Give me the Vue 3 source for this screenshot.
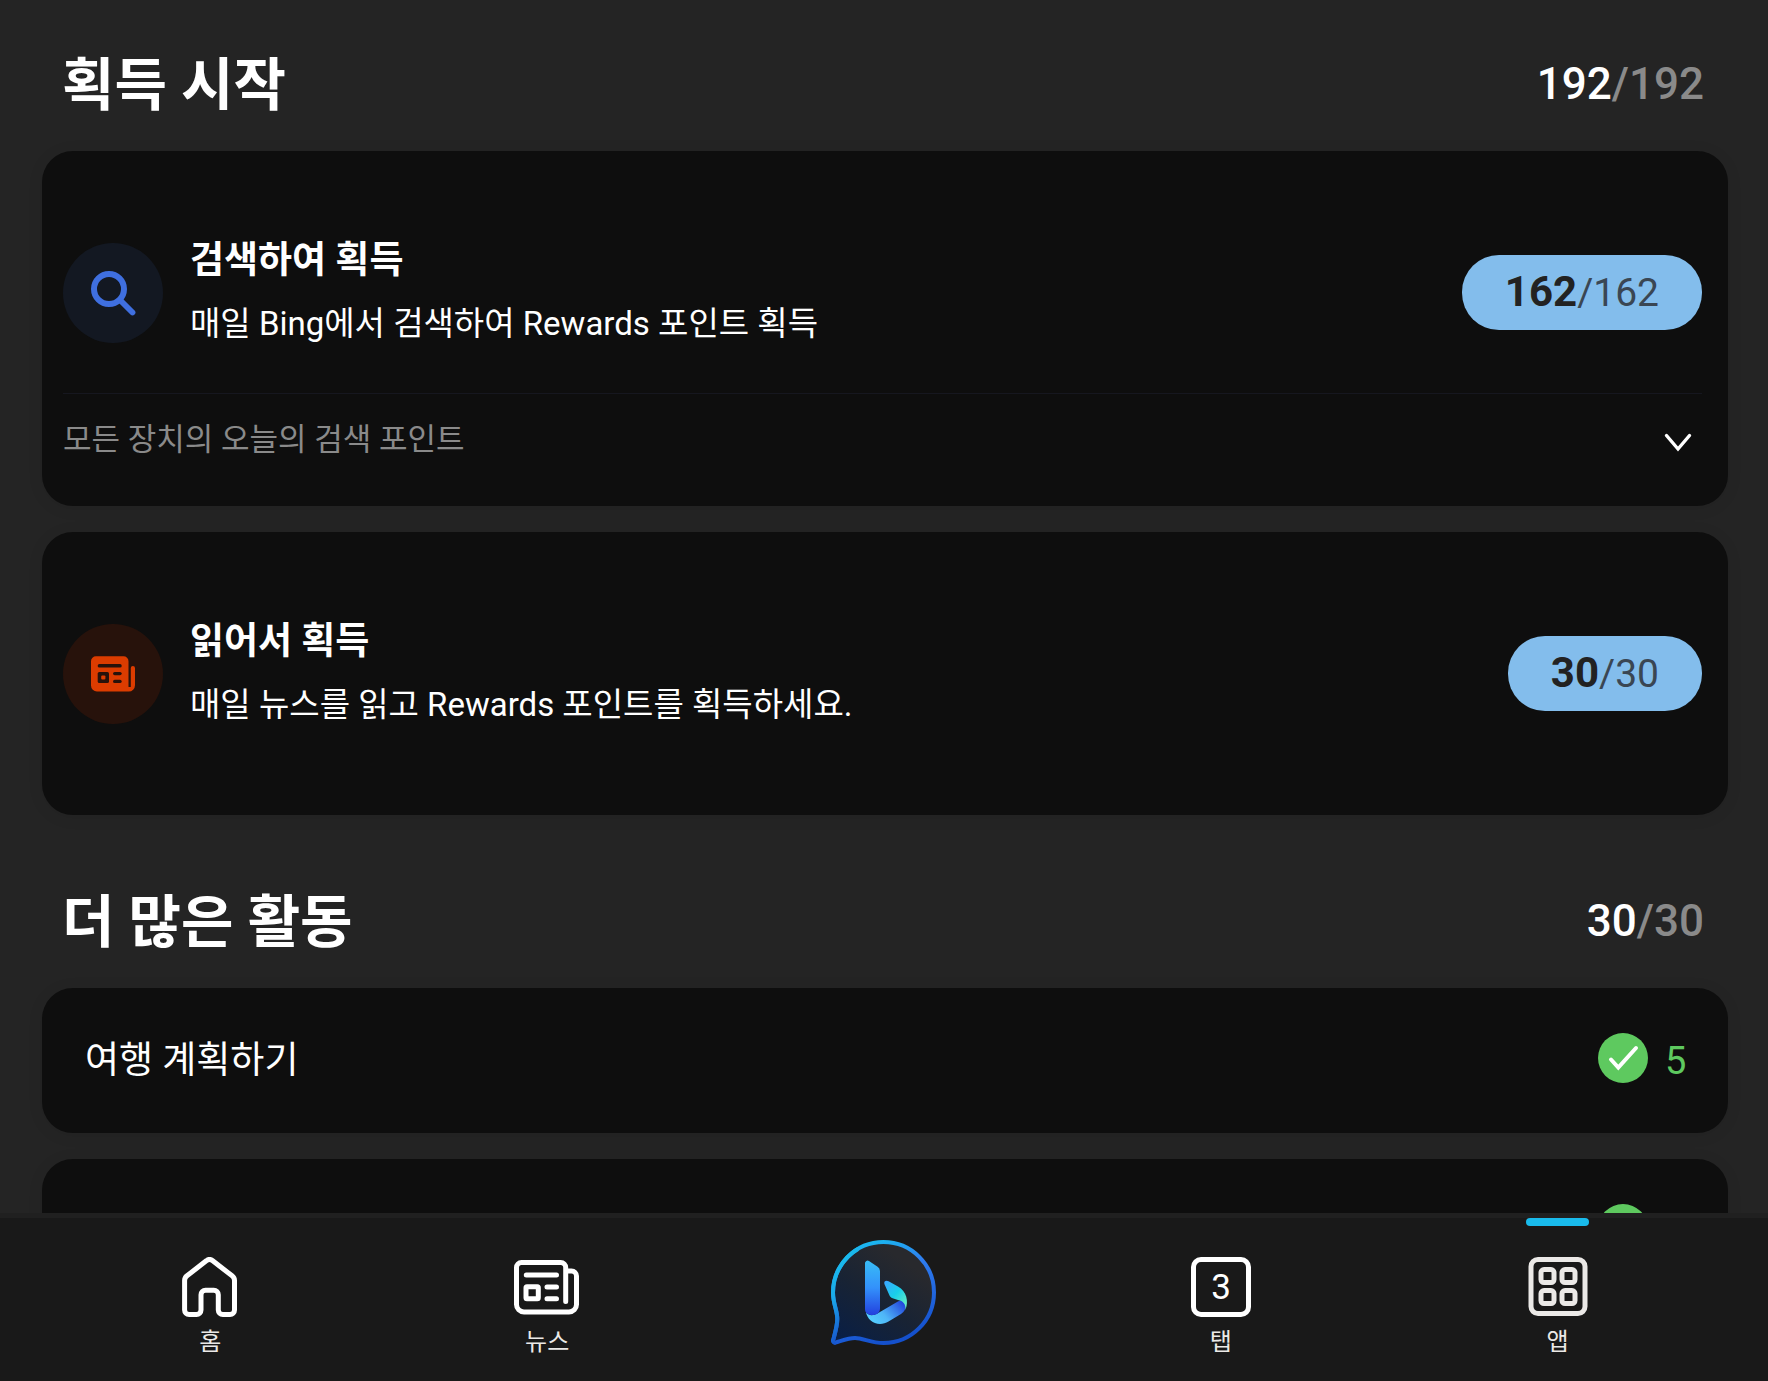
<script setup>
import {computed, ref} from "vue";

  const earn = ref([
    {
      id: 'search',
      title: '검색하여 획득',
      text: '매일 Bing에서 검색하여 Rewards 포인트 획득',
      points: 162,
      max: 162,
      more: '모든 장치의 오늘의 검색 포인트'
    },
    {
      id: 'read',
      title: '읽어서 획득',
      text: '매일 뉴스를 읽고 Rewards 포인트를 획득하세요.',
      points: 30,
      max: 30
    }
  ])

  const activities = ref([
    { id: 1, title: '여행 계획하기', points: 5 },
    { id: 2, title: '', points: null }
  ])

  const tabs = [
    { id: 'home', label: '홈' },
    { id: 'news', label: '뉴스' },
    { id: 'bing', label: '' },
    { id: 'tabs', label: '탭' },
    { id: 'apps', label: '앱' }
  ]

  const active = ref('apps')

  const earned = computed(() => earn.value.reduce((sum, item) => sum + item.points, 0))
  const total = computed(() => earn.value.reduce((sum, item) => sum + item.max, 0))
</script>

<template>
  <div class="screen">
    <main class="content">
      <section>
        <header class="section-head">
          <h2>획득 시작</h2>
          <div class="score">{{ earned }}<span>/{{ total }}</span></div>
        </header>

        <article v-for="item in earn" :key="item.id" class="card">
          <div class="earn-row" :class="{ 'has-more': item.more }">
            <svg v-if="item.id === 'search'" class="earn-icon" viewBox="0 0 100 100">
              <circle cx="50" cy="50" r="50" fill="#131822" />
              <g fill="none" stroke="#3f6fe0" stroke-linecap="round">
                <circle cx="46" cy="46" r="15" stroke-width="6" />
                <path d="M57 57L69.5 69.5" stroke-width="5.8" />
              </g>
            </svg>
            <svg v-else class="earn-icon" viewBox="0 0 100 100">
              <circle cx="50" cy="50" r="50" fill="#27120b" />
              <g transform="translate(28 32.3)">
                <path fill="#dc3c00" d="M5 0H32.5a5 5 0 0 1 5 5V30.7H39.8V11.8a2.1 2.1 0 0 1 4.2 0V29a6.3 6.3 0 0 1-6.3 6.3H6a6 6 0 0 1-6-6V5a5 5 0 0 1 5-5z" />
                <g fill="#27120b">
                  <rect x="6.7" y="7.8" width="24" height="3.5" rx="1.7" />
                  <rect x="6.7" y="15.6" width="11.3" height="11.2" rx="1.6" />
                  <rect x="22" y="15.6" width="8.7" height="3.4" rx="1.7" />
                  <rect x="22" y="23.4" width="8.7" height="3.4" rx="1.7" />
                </g>
                <rect x="10.2" y="19.1" width="4.2" height="4.2" rx="1" fill="#dc3c00" />
              </g>
            </svg>
            <div class="earn-text">
              <h3>{{ item.title }}</h3>
              <p>{{ item.text }}</p>
            </div>
            <div class="pill"><b>{{ item.points }}</b>/{{ item.max }}</div>
          </div>
          <button v-if="item.more" type="button" class="more">
            <span>{{ item.more }}</span>
            <svg viewBox="0 0 28 20">
              <path d="M2.5 2.5L14 16L25.5 2.5" />
            </svg>
          </button>
        </article>
      </section>

      <section class="activities">
        <header class="section-head">
          <h2>더 많은 활동</h2>
          <div class="score">30<span>/30</span></div>
        </header>

        <article v-for="item in activities" :key="item.id" class="card activity">
          <h3>{{ item.title }}</h3>
          <svg viewBox="0 0 50 50">
            <circle cx="25" cy="25" r="25" fill="#5ec95f" />
            <path d="M13 26.5L20.3 34.5L38 15" />
          </svg>
          <span class="points">{{ item.points }}</span>
        </article>
      </section>
    </main>

    <nav class="tab-bar">
      <a
        v-for="tab in tabs"
        :key="tab.id"
        :href="'#' + tab.id"
        :class="{ active: active === tab.id, logo: tab.id === 'bing' }"
        :aria-label="tab.label || 'Bing'"
        @click.prevent="active = tab.id"
      >
        <svg v-if="tab.id === 'home'" class="line" width="56" height="60" viewBox="0 0 56 60">
          <path d="M24.6 3.6L5 18.8a6 6 0 0 0-2.4 4.8V53a4.5 4.5 0 0 0 4.5 4.5h7.4A4.5 4.5 0 0 0 19 53V37.8a4.5 4.5 0 0 1 4.5-4.5h8.3a4.5 4.5 0 0 1 4.5 4.5V53a4.5 4.5 0 0 0 4.5 4.5h7.2a4.5 4.5 0 0 0 4.5-4.5V23.6a6 6 0 0 0-2.4-4.8L30.4 3.6a4.7 4.7 0 0 0-5.8 0z" />
        </svg>
        <svg v-else-if="tab.id === 'news'" class="line" width="66" height="60" viewBox="0 -3 66 60">
          <path d="M51.7 41.4V7.5a5 5 0 0 0-5-5H7.5a5 5 0 0 0-5 5V44.5A7.5 7.5 0 0 0 10 52H55a7.5 7.5 0 0 0 7.5-7.5V16a5 5 0 0 0-5-5H51.7" />
          <path d="M12.3 15H42.5M33 27H42.5M33 38.8H42.5" />
          <rect x="12" y="26.7" width="12.3" height="12" rx="1" />
        </svg>
        <svg v-else-if="tab.id === 'bing'" width="105" height="105" viewBox="0 0 105 105">
          <defs>
            <linearGradient id="ring" x1="0.2" y1="0" x2="0.5" y2="1">
              <stop offset="0" stop-color="#17c0f0" />
              <stop offset="0.35" stop-color="#2f7df0" />
              <stop offset="1" stop-color="#1450cc" />
            </linearGradient>
            <linearGradient id="ringSide" x1="0" y1="0" x2="0.25" y2="1">
              <stop offset="0" stop-color="#18c4ee" />
              <stop offset="0.5" stop-color="#1aa9ea" />
              <stop offset="1" stop-color="#164fcb" />
            </linearGradient>
            <linearGradient id="bubble" x1="0.1" y1="0.95" x2="0.65" y2="0.15">
              <stop offset="0" stop-color="#0a1f44" />
              <stop offset="0.5" stop-color="#182334" />
              <stop offset="1" stop-color="#28292d" />
            </linearGradient>
            <linearGradient id="stem" x1="0" y1="0" x2="0" y2="1">
              <stop offset="0" stop-color="#38bdf6" />
              <stop offset="0.5" stop-color="#3391fb" />
              <stop offset="1" stop-color="#2341de" />
            </linearGradient>
            <linearGradient id="bowl" x1="0" y1="0.7" x2="1" y2="0.2">
              <stop offset="0" stop-color="#55d0ff" />
              <stop offset="0.4" stop-color="#4fb6f8" />
              <stop offset="1" stop-color="#2243dc" />
            </linearGradient>
            <linearGradient id="leaf" x1="0.1" y1="0" x2="0.9" y2="0.9">
              <stop offset="0" stop-color="#3aa8ff" />
              <stop offset="0.5" stop-color="#18cfea" />
              <stop offset="1" stop-color="#6aeec4" />
            </linearGradient>
          </defs>
          <path fill="url(#bubble)" stroke="url(#ring)" stroke-width="4" d="M52.5 2A50.5 50.5 0 1 1 52.5 103C40 103 32 98 24 98C17 98 9 101.5 4.5 102.6A2 2 0 0 1 2.2 100C3.5 95 6.3 86 6.3 79C6.3 70 2 64 2 52.5A50.5 50.5 0 0 1 52.5 2z" />
          <path fill="none" stroke="url(#ringSide)" stroke-width="4" d="M4.5 102.6A2 2 0 0 1 2.2 100C3.5 95 6.3 86 6.3 79C6.3 70 2 64 2 52.5A50.5 50.5 0 0 1 27 9" />
          <path fill="url(#bowl)" d="M34.8 71.5C36 79 42 84 49 84C52 84 55 83.2 57.5 81.6L70 74C73.6 71.6 75.6 67.6 74.8 64.5C73.8 61 70 59.8 67.3 61.3L46 73.8C42 76 37 76 34.8 71.5z" />
          <path fill="url(#leaf)" d="M53.4 44C52.6 41.2 55 40 57.6 41.3L67 46.6C75.6 51.2 78 61.4 74.4 70C75.2 64.4 72 60.8 67 60L61.6 58.2C60 57.6 59 56.6 58.4 55.2z" />
          <path fill="url(#stem)" d="M34 23.2a2.5 2.5 0 0 1 4-2.1L46.6 26.8A5.4 5.4 0 0 1 49 31V68.5C49 73 45.5 75 41.5 75S34 73 34 69z" />
        </svg>
        <svg v-else-if="tab.id === 'tabs'" class="line" width="60" height="60" viewBox="0 0 60 60">
          <rect x="2.5" y="2.5" width="55" height="55" rx="7.5" />
          <text x="30" y="42" text-anchor="middle">3</text>
        </svg>
        <svg v-else class="line" width="60" height="60" viewBox="0 0 60 60">
          <rect x="3" y="2.5" width="54" height="54" rx="7" />
          <rect x="13" y="12.6" width="13" height="13" rx="3" />
          <rect x="34" y="12.6" width="13" height="13" rx="3" />
          <rect x="13" y="33.6" width="13" height="13" rx="3" />
          <rect x="34" y="33.6" width="13" height="13" rx="3" />
        </svg>
        <span v-if="tab.label">{{ tab.label }}</span>
      </a>
    </nav>
  </div>
</template>

<style>
body {
  margin: 0;
  background-color: #242424;
}
</style>

<style scoped>
.screen {
  display: flex;
  flex-direction: column;
  height: 100vh;
  overflow: hidden;
  background-color: #242424;
  color: #fff;
  font-family: Roboto, "Noto Sans CJK KR", sans-serif;
}
.screen svg {
  flex-shrink: 0;
}
h2, h3, p {
  margin: 0;
}

.content {
  flex: 1;
  min-height: 0;
  overflow: hidden;
  padding: 20px 40px 0 42px;
}
.activities {
  margin-top: 42px;
}
.section-head {
  display: flex;
  align-items: center;
  justify-content: space-between;
  height: 131px;
  padding: 0 24px 0 20px;
}
.section-head h2 {
  font-size: 57px;
  line-height: 64px;
  font-weight: 700;
}
.score {
  padding-bottom: 4px;
  font-size: 44px;
  line-height: 48px;
  font-weight: 500;
}
.score span {
  color: #8a8a8a;
}

.card {
  background-color: #0e0e0e;
  border-radius: 31px;
  box-shadow: 0 2px 16px rgba(0, 0, 0, 0.08);
}
.card + .card {
  margin-top: 26px;
}
.card h3 {
  font-size: 37px;
  line-height: 44px;
}
.earn-row {
  display: flex;
  align-items: center;
  margin: 0 26px 0 21px;
  padding: 88px 0;
}
.earn-row.has-more {
  padding-bottom: 47px;
  border-bottom: 1px solid #16171f;
}
.earn-icon {
  width: 100px;
  height: 100px;
}
.earn-text {
  flex: 1;
  display: flex;
  flex-direction: column;
  gap: 19px;
  margin-left: 27px;
}
.earn-text h3 {
  font-weight: 700;
}
.earn-text p {
  font-size: 33px;
  line-height: 44px;
}
.pill {
  padding: 0 43px;
  border-radius: 37px;
  background-color: #83bdec;
  color: #3a4653;
  font-size: 39px;
  line-height: 74px;
}
.pill b {
  color: #222;
  font-size: 42px;
}
.more {
  display: flex;
  align-items: center;
  justify-content: space-between;
  width: 100%;
  height: 112px;
  padding: 0 36px 28px 21px;
  border: none;
  background: none;
  color: #8a8a8a;
  font-family: inherit;
  font-size: 31px;
  cursor: pointer;
}
.more svg {
  width: 28px;
  height: 20px;
  margin-top: 14px;
  fill: none;
  stroke: #fff;
  stroke-width: 3.4;
  stroke-linecap: round;
}

.activity {
  display: flex;
  align-items: center;
  height: 145px;
  padding: 0 41px 0 43px;
}
.activity h3 {
  flex: 1;
  font-weight: 400;
}
.activity svg {
  width: 50px;
  height: 50px;
  margin: 0 17px 5px 0;
}
.activity path {
  fill: none;
  stroke: #fff;
  stroke-width: 4;
  stroke-linecap: round;
}
.points {
  min-width: 22px;
  color: #5ec95f;
  font-size: 38px;
  line-height: 44px;
}

.tab-bar {
  display: flex;
  height: 163px;
  padding: 0 42px;
  border-top: 5px solid #202020;
  background-color: #191919;
}
.tab-bar a {
  position: relative;
  flex: 1;
  display: flex;
  flex-direction: column;
  align-items: center;
  gap: 9px;
  padding-top: 39px;
  color: #ebe9e7;
  font-size: 24px;
  line-height: 32px;
  text-decoration: none;
}
.tab-bar a.logo {
  padding-top: 22px;
}
.tab-bar a.active::before {
  content: '';
  position: absolute;
  top: 0;
  width: 63px;
  height: 8px;
  border-radius: 4px;
  background-color: #19bbec;
}
.line {
  fill: none;
  stroke: #fff;
  stroke-width: 5;
  stroke-linecap: round;
  stroke-linejoin: round;
}
.active .line {
  stroke: #ebe9e7;
}
.line text {
  fill: #fff;
  stroke: none;
  font-size: 35px;
}
</style>
